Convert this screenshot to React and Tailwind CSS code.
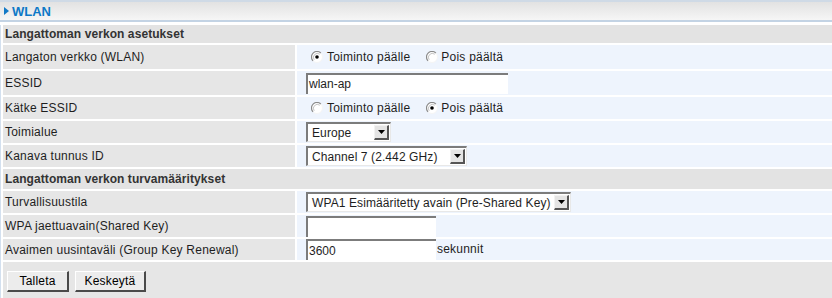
import React from "react";

function Radio({ checked }) {
  return (
    <svg width="12" height="12" viewBox="0 0 12 12" className="shrink-0">
      <circle cx="6" cy="6" r="5.5" fill="#ffffff" />
      <path d="M2.1 9.9 A5.5 5.5 0 0 1 9.9 2.1" fill="none" stroke="#8a8a8a" strokeWidth="1.2" />
      <path d="M3.2 8.8 A4 4 0 0 1 8.8 3.2" fill="none" stroke="#c4c4c4" strokeWidth="1" />
      <path d="M9.9 2.1 A5.5 5.5 0 0 1 2.1 9.9" fill="none" stroke="#f4f4f4" strokeWidth="1" />
      {checked && <circle cx="6" cy="6" r="1.8" fill="#000000" />}
    </svg>
  );
}

function RadioPair({ first }) {
  return (
    <div className="flex items-center tracking-[0.22px]">
      <span className="ml-[5px] mr-[4px] flex items-center">
        <Radio checked={first} />
      </span>
      <span>Toiminto päälle</span>
      <span className="ml-[16px] mr-[3px] flex items-center">
        <Radio checked={!first} />
      </span>
      <span>Pois päältä</span>
    </div>
  );
}

function Arrow() {
  return (
    <span className="flex h-[15px] w-[15px] items-center justify-center border-t border-l border-t-[#f2f2f2] border-l-[#f2f2f2] border-r-2 border-b-2 border-r-[#555] border-b-[#555] bg-[#e4e4e4]">
      <svg width="7" height="4" viewBox="0 0 7 4">
        <path d="M0 0 H7 L3.5 4 Z" fill="#000" />
      </svg>
    </span>
  );
}

function Select({ w, text }) {
  return (
    <div
      className={`flex h-[20px] items-center justify-between border-t-2 border-l-2 border-t-[#7c7c7c] border-l-[#7c7c7c] border-b border-r border-b-[#e8e8e8] border-r-[#e8e8e8] bg-white pl-[4px] pr-[1px] tracking-[0.1px] ${w}`}
    >
      <span className="whitespace-nowrap">{text}</span>
      <Arrow />
    </div>
  );
}

function Input({ w, value }) {
  return (
    <div
      className={`flex h-[21px] items-center border-t-2 border-l-2 border-t-[#7c7c7c] border-l-[#7c7c7c] bg-white pl-[1px] ${w}`}
    >
      <span>{value}</span>
    </div>
  );
}

function Row({ h, label, children }) {
  return (
    <div className={`flex gap-[2px] ${h}`}>
      <div className="flex w-[292px] shrink-0 items-center bg-[#e6e6e6] pl-[2px] tracking-[0.22px]">{label}</div>
      <div className="flex flex-1 items-center bg-[#eef4fd] pl-[9px]">{children}</div>
    </div>
  );
}

function Section({ h, children }) {
  return (
    <div className={`flex items-center bg-[#e3e3e3] pl-[2px] font-bold tracking-[0.08px] text-[#333] ${h}`}>{children}</div>
  );
}

function Button({ w, children }) {
  return (
    <div
      className={`flex h-[21px] items-center justify-center border-t border-l border-t-white border-l-white border-r-2 border-b-2 border-r-[#4a4a4a] border-b-[#4a4a4a] bg-[#ececec] tracking-[0.2px] text-black ${w}`}
    >
      {children}
    </div>
  );
}

export default function App() {
  return (
    <div className="h-[298px] w-[832px] overflow-hidden bg-white font-['Liberation_Sans',Arial,sans-serif] text-[12px] leading-none text-[#1e1e1e]">
      <div className="flex h-[22px] items-center border-t-2 border-b-2 border-t-[#cfdae6] border-b-[#c3d3e4] bg-gradient-to-b from-[#e2e2e2] to-[#f6f6f6] pl-[4px]">
        <svg width="5" height="8" viewBox="0 0 5 8" className="mr-[3px]">
          <path d="M0 0 L5 4 L0 8 Z" fill="#1279c6" />
        </svg>
        <span className="font-bold text-[13px] text-[#0d79c7]">WLAN</span>
      </div>
      <div className="mt-[3px] flex h-[273px] flex-col gap-[2px] border-l border-l-[#d3e0ef] pl-[2px]">
        <Section h="h-[18px]">Langattoman verkon asetukset</Section>
        <Row h="h-[24px]" label="Langaton verkko (WLAN)">
          <RadioPair first={true} />
        </Row>
        <Row h="h-[24px]" label="ESSID">
          <Input w="w-[202px]" value="wlan-ap" />
        </Row>
        <Row h="h-[22px]" label="Kätke ESSID">
          <RadioPair first={false} />
        </Row>
        <Row h="h-[22px]" label="Toimialue">
          <Select w="w-[85px]" text="Europe" />
        </Row>
        <Row h="h-[22px]" label="Kanava tunnus ID">
          <Select w="w-[161px]" text="Channel 7 (2.442 GHz)" />
        </Row>
        <Section h="h-[20px]">Langattoman verkon turvamääritykset</Section>
        <Row h="h-[22px]" label="Turvallisuustila">
          <Select w="w-[265px]" text="WPA1 Esimääritetty avain (Pre-Shared Key)" />
        </Row>
        <Row h="h-[22px]" label="WPA jaettuavain(Shared Key)">
          <Input w="w-[130px]" value="" />
        </Row>
        <Row h="h-[21px]" label="Avaimen uusintaväli (Group Key Renewal)">
          <Input w="w-[130px]" value="3600" />
          <span className="ml-[1px] -mt-[2px] tracking-[0.22px]">sekunnit</span>
        </Row>
        <div className="flex flex-1 items-start gap-[6px] bg-[#e6e6e6] pl-[4px] pt-[9px]">
          <Button w="w-[62px]">Talleta</Button>
          <Button w="w-[71px]">Keskeytä</Button>
        </div>
      </div>
    </div>
  );
}
